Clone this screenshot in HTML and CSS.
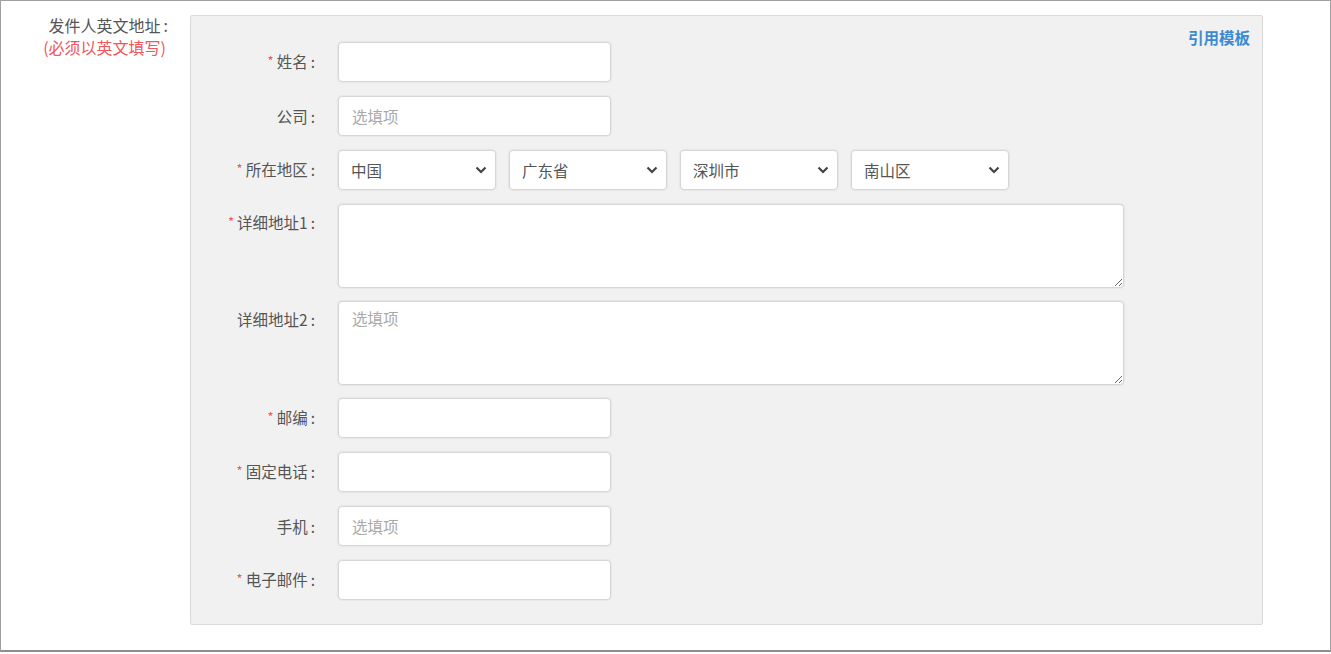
FILE: index.html
```html
<!DOCTYPE html>
<html lang="zh-CN">
<head>
    <meta charset="UTF-8">
    <title>发件人英文地址</title>
    <link rel="stylesheet" href="styles.css">
</head>
<body>
    <div class="page-frame">
        <!-- 左侧标题 -->
        <div class="side-label">
            <div class="side-title">发件人英文地址<span class="colon">:</span></div>
            <div class="side-note">(必须以英文填写)</div>
        </div>

        <!-- 表单面板 -->
        <div class="form-panel">
            <a class="template-link">引用模板</a>

            <div class="form-row">
                <label class="row-label"><i class="req">*</i>姓名<span class="colon">:</span></label>
                <input class="text-input" type="text">
            </div>

            <div class="form-row">
                <label class="row-label">公司<span class="colon">:</span></label>
                <input class="text-input" type="text" placeholder="选填项">
            </div>

            <div class="form-row">
                <label class="row-label"><i class="req">*</i>所在地区<span class="colon">:</span></label>
                <div class="select-group">
                    <div class="select-box"><span>中国</span><svg class="chevron" viewBox="0 0 12 8"><path d="M1.5 1.5L6 6L10.5 1.5"/></svg></div>
                    <div class="select-box"><span>广东省</span><svg class="chevron" viewBox="0 0 12 8"><path d="M1.5 1.5L6 6L10.5 1.5"/></svg></div>
                    <div class="select-box"><span>深圳市</span><svg class="chevron" viewBox="0 0 12 8"><path d="M1.5 1.5L6 6L10.5 1.5"/></svg></div>
                    <div class="select-box"><span>南山区</span><svg class="chevron" viewBox="0 0 12 8"><path d="M1.5 1.5L6 6L10.5 1.5"/></svg></div>
                </div>
            </div>

            <div class="form-row top">
                <label class="row-label"><i class="req">*</i>详细地址1<span class="colon">:</span></label>
                <textarea class="text-area"></textarea>
            </div>

            <div class="form-row top">
                <label class="row-label">详细地址2<span class="colon">:</span></label>
                <textarea class="text-area" placeholder="选填项"></textarea>
            </div>

            <div class="form-row">
                <label class="row-label"><i class="req">*</i>邮编<span class="colon">:</span></label>
                <input class="text-input" type="text">
            </div>

            <div class="form-row">
                <label class="row-label"><i class="req">*</i>固定电话<span class="colon">:</span></label>
                <input class="text-input" type="text">
            </div>

            <div class="form-row">
                <label class="row-label">手机<span class="colon">:</span></label>
                <input class="text-input" type="text" placeholder="选填项">
            </div>

            <div class="form-row">
                <label class="row-label"><i class="req">*</i>电子邮件<span class="colon">:</span></label>
                <input class="text-input" type="text">
            </div>
        </div>
    </div>
</body>
</html>
```

FILE: styles.css
```css
/* 全局样式 */
* {
    margin: 0;
    padding: 0;
    box-sizing: border-box;
}

body {
    font-family: "Noto Sans CJK SC", "Liberation Sans", sans-serif;
    font-size: 15.5px;
    color: #555;
    background: #fff;
}

/* 外框 */
.page-frame {
    width: 1331px;
    height: 652px;
    border: 1px solid #a0a0a0;
    border-bottom: 2px solid #8f8f8f;
    display: flex;
    align-items: flex-start;
}

.colon {
    margin-left: 3px;
}

/* 左侧标题 */
.side-label {
    width: 189px;
    flex-shrink: 0;
    padding: 13px 22px 0 0;
    text-align: right;
    font-size: 16px;
    line-height: 22px;
}

.side-title {
    color: #555;
}

.side-note {
    color: #f0565a;
    padding-right: 2px;
}

/* 表单面板 */
.form-panel {
    position: relative;
    width: 1073px;
    height: 610px;
    margin-top: 14px;
    padding: 26px 0 0;
    background: #f1f1f1;
    border: 1px solid #dadada;
    border-radius: 2px;
}

.template-link {
    position: absolute;
    top: 10px;
    right: 12px;
    color: #3d8ad3;
    font-weight: bold;
    line-height: 22px;
    cursor: pointer;
}

.form-row {
    display: flex;
    align-items: center;
    margin-bottom: 14px;
}

.form-row.top {
    align-items: flex-start;
    margin-bottom: 13px;
}

.form-row.top .row-label {
    padding-top: 7px;
}

.row-label {
    width: 124px;
    margin-right: 23px;
    text-align: right;
    line-height: 22px;
    color: #555;
    white-space: nowrap;
}

.req {
    font-style: normal;
    color: #f0565a;
    font-size: 13px;
    margin-right: 3px;
    position: relative;
    top: -2px;
}

/* 输入框 */
.text-input,
.text-area,
.select-box {
    background: #fff;
    border: 1px solid #d6d6d6;
    border-radius: 4px;
    box-shadow: 0 0 1px 1px #e6e6e6;
    font-family: inherit;
    font-size: 15.5px;
    color: #555;
    outline: none;
}

.text-input {
    width: 273px;
    height: 40px;
    padding: 0 13px;
}

.text-area {
    width: 786px;
    height: 84px;
    padding: 5px 13px;
    line-height: 22px;
}

.text-input::placeholder,
.text-area::placeholder {
    color: #a9a9a9;
}

/* 下拉选择 */
.select-group {
    display: flex;
    gap: 13px;
}

.select-box {
    width: 158px;
    height: 40px;
    padding: 0 8px 0 12px;
    display: flex;
    align-items: center;
    justify-content: space-between;
}

.chevron {
    width: 12px;
    height: 8px;
    fill: none;
    stroke: #444;
    stroke-width: 2.2;
}
```
